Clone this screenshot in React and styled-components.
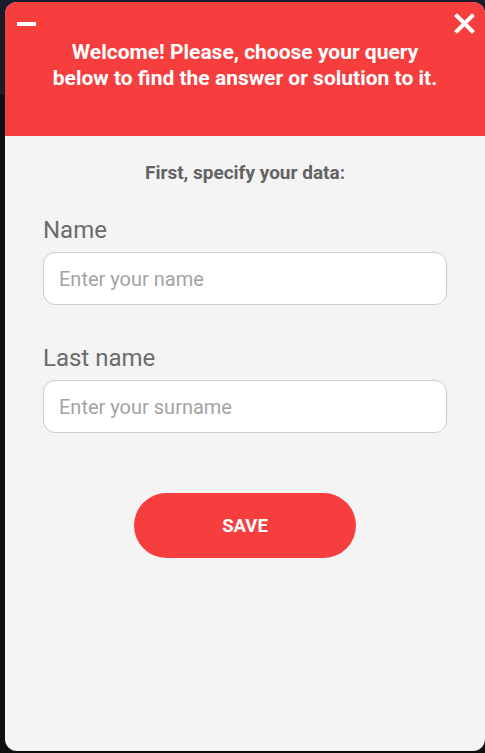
import React from 'react';
import styled, { createGlobalStyle } from 'styled-components';

const GlobalStyle = createGlobalStyle`
  html, body {
    margin: 0;
    padding: 0;
  }
  body {
    background: linear-gradient(180deg, #1b1c2b 0px, #1b1c2b 95px, #0f0f11 95px);
    font-family: Roboto, "Liberation Sans", sans-serif;
    min-height: 753px;
  }
`;

const Widget = styled.div`
  position: relative;
  margin: 2px 0 0 5px;
  width: 480px;
  height: 749px;
  border-radius: 12px;
  overflow: hidden;
  display: flex;
  flex-direction: column;
  background: #f4f4f4;
`;

const Header = styled.header`
  position: relative;
  height: 134px;
  flex-shrink: 0;
  box-sizing: border-box;
  padding: 37px 10px 0;
  background: #f73e3f;
  color: #fff;
`;

const Minimize = styled.button`
  position: absolute;
  top: 20px;
  left: 12px;
  width: 19px;
  height: 4px;
  padding: 0;
  border: none;
  background: #fff;
  cursor: pointer;
`;

const Close = styled.button`
  position: absolute;
  top: 11px;
  right: 10px;
  width: 21px;
  height: 21px;
  padding: 0;
  border: none;
  background: transparent;
  cursor: pointer;
  display: flex;
`;

const Welcome = styled.p`
  margin: 0;
  text-align: center;
  font-size: 21px;
  line-height: 26px;
  font-weight: 700;
`;

const Body = styled.main`
  flex: 1;
  display: flex;
  flex-direction: column;
  padding: 26px 38px 0;
`;

const Subtitle = styled.h2`
  margin: 0;
  text-align: center;
  font-size: 19px;
  line-height: 22px;
  font-weight: 700;
  color: #636363;
`;

const Form = styled.form`
  display: flex;
  flex-direction: column;
  margin-top: 32px;
`;

const Field = styled.label`
  display: flex;
  flex-direction: column;
  gap: 8px;
  & + & {
    margin-top: 39px;
  }
`;

const LabelText = styled.span`
  font-size: 24px;
  line-height: 28px;
  color: #6b6b6b;
`;

const Input = styled.input`
  box-sizing: border-box;
  height: 53px;
  width: 100%;
  padding: 0 15px;
  border: 1px solid #cbcbcb;
  border-radius: 12px;
  background: #fff;
  font-family: Roboto, "Liberation Sans", sans-serif;
  font-size: 20px;
  color: #444;
  outline: none;
  &::placeholder {
    color: #a3a3a3;
  }
`;

const SaveButton = styled.button`
  align-self: center;
  margin-top: 60px;
  width: 222px;
  height: 65px;
  border: none;
  border-radius: 33px;
  background: #f73e3f;
  color: #fff;
  font-family: Roboto, "Liberation Sans", sans-serif;
  font-size: 18.5px;
  font-weight: 700;
  cursor: pointer;
`;

const App = () => {
  return (
    <>
      <GlobalStyle />
      <Widget>
        <Header>
          <Minimize aria-label="Minimize" />
          <Close aria-label="Close">
            <svg width="21" height="21" viewBox="0 0 21 21">
              <path d="M3 3 L18 18 M18 3 L3 18" stroke="#fff" strokeWidth="4" strokeLinecap="square" />
            </svg>
          </Close>
          <Welcome>
            Welcome! Please, choose your query
            <br />
            below to find the answer or solution to it.
          </Welcome>
        </Header>
        <Body>
          <Subtitle>First, specify your data:</Subtitle>
          <Form onSubmit={(e) => e.preventDefault()}>
            <Field>
              <LabelText>Name</LabelText>
              <Input placeholder="Enter your name" />
            </Field>
            <Field>
              <LabelText>Last name</LabelText>
              <Input placeholder="Enter your surname" />
            </Field>
            <SaveButton type="submit">SAVE</SaveButton>
          </Form>
        </Body>
      </Widget>
    </>
  );
};

export default App;
